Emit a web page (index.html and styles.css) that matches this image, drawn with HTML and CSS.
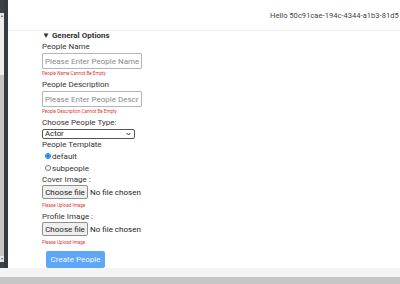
FILE: index.html
```html
<!DOCTYPE html>
<html lang="en">
<head>
    <meta charset="UTF-8">
    <meta name="viewport" content="width=device-width, initial-scale=1.0">
    <title>Create People</title>
    <link rel="stylesheet" href="styles.css">
</head>
<body>
    <div class="window">
        <div class="main">
            <!-- Sidebar edge with its scrollbar -->
            <div class="sidebar">
                <div class="sidebar-scroll">
                    <div class="scroll-cap"></div>
                    <div class="scroll-arrow">&#9652;</div>
                    <div class="scroll-track-light"></div>
                    <div class="scroll-track"></div>
                    <div class="scroll-arrow">&#9662;</div>
                    <div class="scroll-cap bottom"></div>
                </div>
                <div class="sidebar-edge"></div>
            </div>

            <div class="content">
                <header class="topbar">
                    <span class="greeting">Hello 50c91cae-194c-4344-a1b3-81d5</span>
                </header>

                <form class="people-form">
                    <div class="section-title">&#9660; General Options</div>

                    <label class="field-label">People Name</label>
                    <input class="text-input" type="text" placeholder="Please Enter People Name">
                    <div class="field-error">People Name Cannot Be Empty</div>

                    <label class="field-label">People Description</label>
                    <input class="text-input" type="text" placeholder="Please Enter People Description">
                    <div class="field-error">People Description Cannot Be Empty</div>

                    <label class="field-label">Choose People Type:</label>
                    <div class="select-wrap">
                        <select class="type-select">
                            <option>Actor</option>
                            <option>Director</option>
                            <option>Writer</option>
                        </select>
                        <svg class="select-chevron" viewBox="0 0 8 5" width="5" height="4">
                            <path d="M1 1 L4 4 L7 1" fill="none" stroke="#222" stroke-width="1.6"/>
                        </svg>
                    </div>

                    <label class="field-label compact">People Template</label>
                    <label class="radio-row"><input type="radio" name="template" checked>default</label>
                    <label class="radio-row"><input type="radio" name="template">subpeople</label>

                    <label class="field-label compact">Cover Image :</label>
                    <div class="file-row">
                        <span class="file-button">Choose file</span>
                        <span class="file-name">No file chosen</span>
                    </div>
                    <div class="field-error upload">Please Upload Image</div>

                    <label class="field-label compact">Profile Image :</label>
                    <div class="file-row">
                        <span class="file-button">Choose file</span>
                        <span class="file-name">No file chosen</span>
                    </div>
                    <div class="field-error upload">Please Upload Image</div>

                    <button class="submit-btn" type="button" disabled>Create People</button>
                </form>
            </div>
        </div>
        <div class="bottom-strip"></div>
        <div class="hscroll"></div>
    </div>
</body>
</html>
```

FILE: styles.css
```css
:root {
    --text: #2b2b2b;
    --muted: #8a8a8a;
    --error: #d63a3a;
    --primary: #5ea6f6;
    --sidebar: #363b40;
    --scroll: #c6c6c6;
}

* {
    box-sizing: border-box;
}

body {
    margin: 0;
    font-family: Roboto, 'Liberation Sans', sans-serif;
    color: var(--text);
    background: #fff;
    overflow: hidden;
}

.window {
    width: 400px;
    height: 284px;
    display: flex;
    flex-direction: column;
}

.main {
    display: flex;
    height: 268px;
    flex-shrink: 0;
    overflow: hidden;
}

/* Sidebar edge */
.sidebar {
    display: flex;
    width: 8px;
    flex-shrink: 0;
}

.sidebar-scroll {
    width: 4px;
    display: flex;
    flex-direction: column;
    background: var(--sidebar);
}

.scroll-cap {
    height: 13px;
    background: #3d4247;
}

.scroll-cap.bottom {
    height: 6px;
}

.scroll-arrow {
    height: 6px;
    background: #e8e8e8;
    font-size: 4px;
    line-height: 6px;
    color: #555;
    text-align: center;
    overflow: hidden;
}

.scroll-track-light {
    height: 56px;
    background: #eeeeee;
}

.scroll-track {
    flex: 1;
    background: var(--scroll);
}

.sidebar-edge {
    width: 4px;
    background: var(--sidebar);
}

.content {
    flex: 1;
    display: flex;
    flex-direction: column;
    min-width: 0;
}

/* Top bar */
.topbar {
    height: 31px;
    flex-shrink: 0;
    border-bottom: 1px solid #ececec;
    display: flex;
    align-items: center;
    padding-left: 262px;
    white-space: nowrap;
    overflow: hidden;
}

.greeting {
    font-size: 7.6px;
    color: #444;
}

/* Form */
.people-form {
    display: flex;
    flex-direction: column;
    align-items: flex-start;
    padding-left: 34px;
    flex-shrink: 0;
}

.people-form > * {
    flex-shrink: 0;
}

.section-title {
    font-size: 8px;
    font-weight: bold;
    line-height: 10px;
    height: 10px;
    color: #333;
}

.field-label {
    font-size: 8px;
    line-height: 12px;
    height: 12px;
    color: #333;
}

.field-label.compact {
    line-height: 11px;
    height: 11px;
}

.text-input {
    width: 100px;
    height: 16px;
    margin: 0;
    padding: 0 2px;
    border: 1px solid #b5b5b5;
    border-radius: 1px;
    outline: none;
    font-family: inherit;
    font-size: 8px;
    color: var(--text);
    background: #fff;
}

.text-input::placeholder {
    color: var(--muted);
}

.field-error {
    font-size: 4.6px;
    line-height: 10px;
    height: 10px;
    color: var(--error);
}

.field-error.upload {
    line-height: 13px;
    height: 12px;
}

.select-wrap {
    position: relative;
    width: 93px;
    height: 10px;
}

.type-select {
    appearance: none;
    display: block;
    width: 100%;
    height: 10px;
    margin: 0;
    padding: 0 2px;
    border: 1px solid #555;
    border-radius: 2px;
    font-family: inherit;
    font-size: 7.8px;
    line-height: 8px;
    color: #222;
    background: #fff;
}

.select-chevron {
    position: absolute;
    right: 4px;
    top: 3px;
    pointer-events: none;
}

.radio-row {
    display: flex;
    align-items: center;
    height: 12px;
    font-size: 8px;
    color: #333;
    padding-left: 3px;
}

.radio-row input {
    width: 6px;
    height: 6px;
    margin: 0 1px 0 0;
}

/* File pickers */
.file-row {
    display: flex;
    align-items: center;
    gap: 2px;
    height: 14px;
}

.file-button {
    height: 14px;
    width: 46px;
    display: flex;
    align-items: center;
    justify-content: center;
    font-size: 8px;
    color: #222;
    background: #efefef;
    border: 1px solid #8f8f8f;
    border-radius: 2px;
}

.file-name {
    font-size: 8px;
    color: #222;
}

.submit-btn {
    margin: 3px 0 0 4px;
    width: 59px;
    height: 17px;
    padding: 0;
    border: none;
    border-radius: 2px;
    background: var(--primary);
    color: #f2f7ff;
    font-family: inherit;
    font-size: 8px;
}

/* Bottom of the window */
.bottom-strip {
    height: 9px;
    flex-shrink: 0;
    background: #f4f4f4;
}

.hscroll {
    flex: 1;
    background: var(--scroll);
}
```
